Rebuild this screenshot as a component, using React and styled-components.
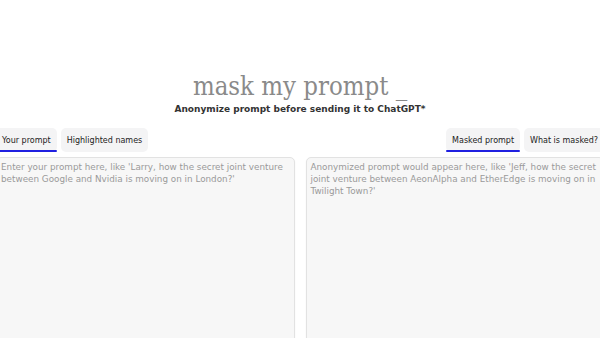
import React, { useState } from "react";
import styled, { createGlobalStyle } from "styled-components";

const GlobalStyle = createGlobalStyle`
  body {
    margin: 0;
    background: #ffffff;
    overflow: hidden;
    font-family: "DejaVu Sans", sans-serif;
  }
`;

function App() {
  const [leftTab, setLeftTab] = useState("prompt");
  const [rightTab, setRightTab] = useState("masked");

  return (
    <Page>
      <GlobalStyle />
      <Header>
        <Title>mask my prompt _</Title>
        <Subtitle>Anonymize prompt before sending it to ChatGPT*</Subtitle>
      </Header>
      <Columns>
        <Column>
          <Tabs>
            <Tab active={leftTab === "prompt"} onClick={() => setLeftTab("prompt")}>
              Your prompt
            </Tab>
            <Tab active={leftTab === "names"} onClick={() => setLeftTab("names")}>
              Highlighted names
            </Tab>
          </Tabs>
          <Area placeholder="Enter your prompt here, like 'Larry, how the secret joint venture between Google and Nvidia is moving on in London?'" />
        </Column>
        <Column>
          <Tabs right>
            <Tab active={rightTab === "masked"} onClick={() => setRightTab("masked")}>
              Masked prompt
            </Tab>
            <Tab active={rightTab === "what"} onClick={() => setRightTab("what")}>
              What is masked?
            </Tab>
          </Tabs>
          <Area
            readOnly
            placeholder="Anonymized prompt would appear here, like 'Jeff, how the secret joint venture between AeonAlpha and EtherEdge is moving on in Twilight Town?'"
          />
        </Column>
      </Columns>
    </Page>
  );
}

const Page = styled.div`
  width: 100%;
  padding-top: 72px;
`;

const Header = styled.div`
  display: flex;
  flex-direction: column;
  align-items: center;
`;

const Title = styled.h1`
  margin: 0;
  font-family: "DejaVu Serif", "Liberation Serif", serif;
  font-stretch: condensed;
  font-weight: 200;
  font-size: 25.5px;
  line-height: 28px;
  color: #8a8a8a;
`;

const Subtitle = styled.div`
  margin-top: 3px;
  font-family: "DejaVu Sans", sans-serif;
  font-weight: bold;
  font-size: 9px;
  line-height: 12px;
  color: #333;
`;

const Columns = styled.div`
  display: grid;
  grid-template-columns: 1fr 1fr;
  gap: 11px;
  width: calc(100% + 8px);
  margin: 13px 0 0 -4px;
`;

const Column = styled.div`
  display: flex;
  flex-direction: column;
`;

const Tabs = styled.div`
  display: flex;
  gap: 4px;
  justify-content: ${(p) => (p.right ? "flex-end" : "flex-start")};
  margin-bottom: 5px;
`;

const Tab = styled.button`
  position: relative;
  height: 24px;
  padding: 0 6px;
  border: none;
  border-radius: 5px;
  background: #f4f4f5;
  font-family: "DejaVu Sans", sans-serif;
  font-size: 8px;
  color: #222;
  cursor: pointer;

  &::after {
    content: "";
    display: ${(p) => (p.active ? "block" : "none")};
    position: absolute;
    left: 0;
    right: 0;
    bottom: 0;
    height: 2px;
    border-radius: 2px;
    background: #2020e0;
  }
`;

const Area = styled.textarea`
  height: 200px;
  padding: 3px 4px;
  border: 1px solid #e2e2e2;
  border-radius: 5px;
  background: #f7f7f7;
  font-family: "DejaVu Sans", sans-serif;
  font-size: 8.8px;
  line-height: 12px;
  color: #333;
  resize: none;
  box-shadow: 0 1px 2px rgba(0, 0, 0, 0.06);

  &::placeholder {
    color: #9a9a9a;
  }
`;

export default App;
